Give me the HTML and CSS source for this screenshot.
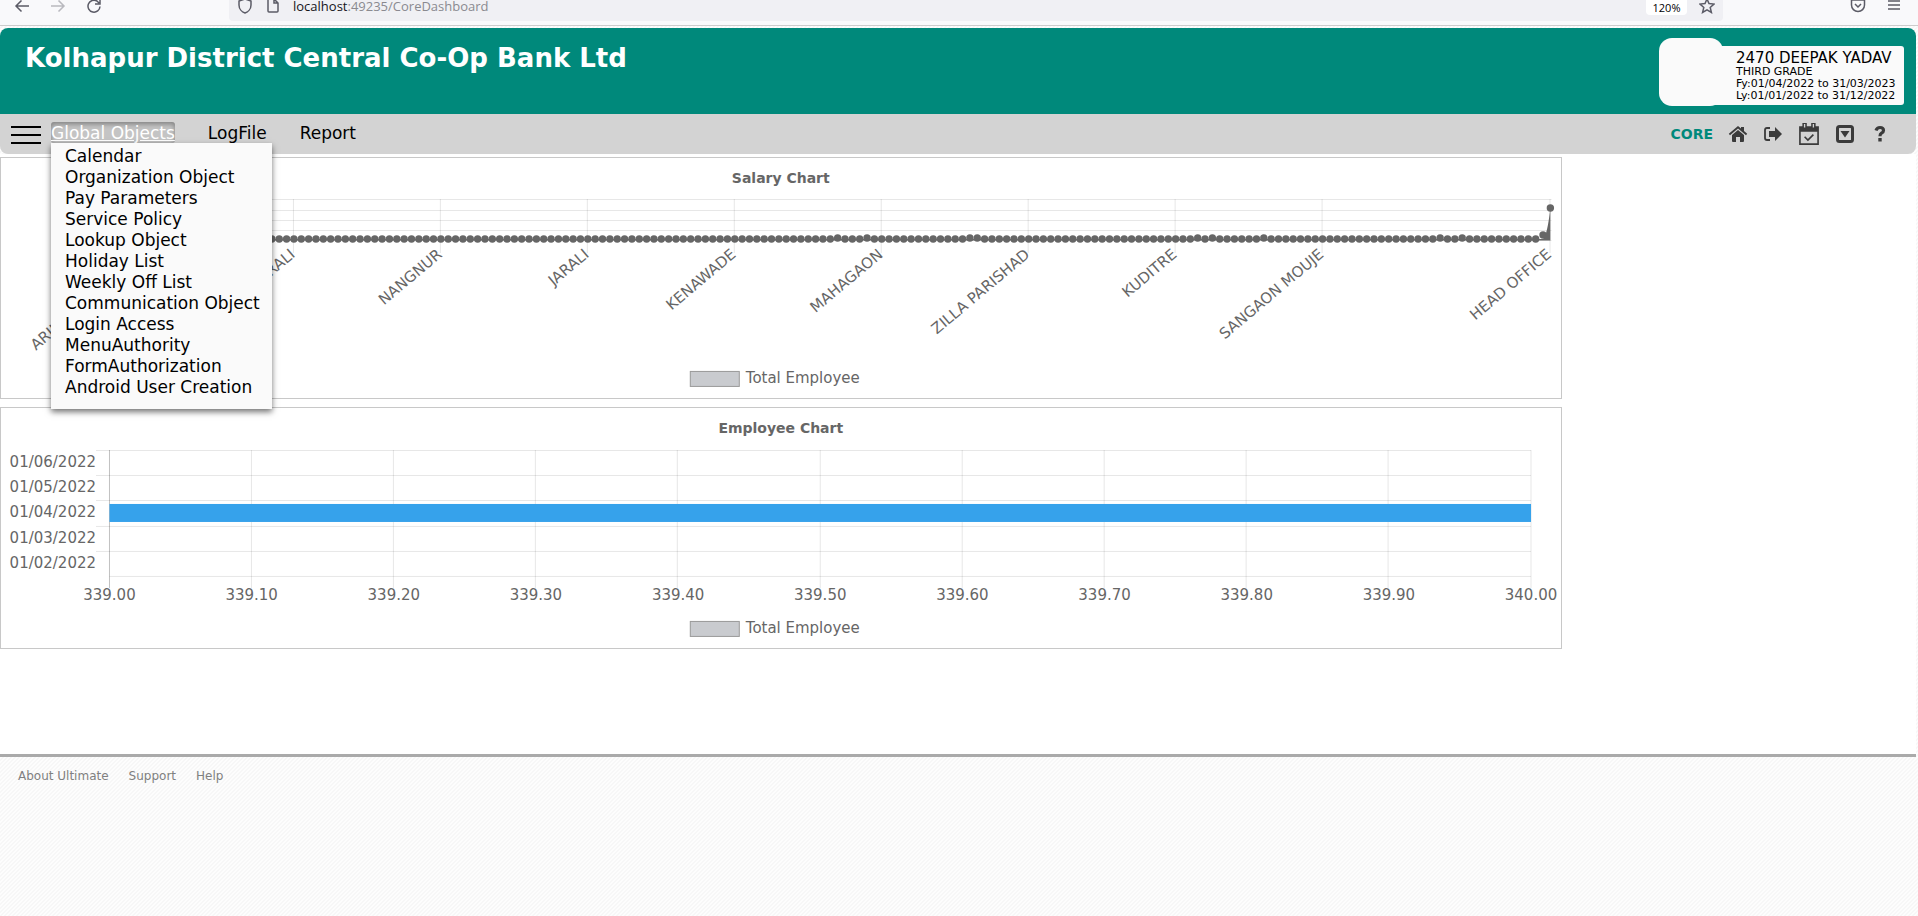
FILE: index.html
```html
<!DOCTYPE html>
<html lang="en">
<head>
<meta charset="utf-8">
<title>Core Dashboard</title>
<link rel="stylesheet" href="styles.css">
</head>
<body>
<div class="browser">
  <div class="browser-nav">
    <button class="tool" aria-label="Back"><svg width="16" height="16" viewBox="0 0 16 16"><path d="M15 8H2M7.500 2.500L2 8l5.500 5.500"/></svg></button>
    <button class="tool tool-off" aria-label="Forward"><svg width="16" height="16" viewBox="0 0 16 16"><path d="M1 8h13M8.500 2.500L14 8l-5.500 5.500"/></svg></button>
    <button class="tool" aria-label="Reload"><svg width="16" height="16" viewBox="0 0 16 16"><path d="M14 8.500A6 6 0 1 1 11 3l2 2M14 1v5H9"/></svg></button>
  </div>
  <div class="urlbar">
    <svg class="line-icon" width="16" height="16" viewBox="0 0 16 16"><path d="M8 1l6 2v4c0 4-3 7-6 8-3-1-6-4-6-8V3z"/></svg>
    <svg class="line-icon" width="16" height="16" viewBox="0 0 16 16"><path d="M3 1h6l4 4v8q0 1-1 1H4q-1 0-1-1zM9 1v4h4"/></svg>
    <span class="url">localhost<span class="url-rest">:49235/CoreDashboard</span></span>
    <button class="zoom-level">120%</button>
    <button class="tool" aria-label="Bookmark"><svg width="16" height="16" viewBox="0 0 16 16"><path d="M8 1l2 4.600 5 .5-3.800 3.300 1.200 5L8 11.800l-4.400 2.600 1.200-5L1 6.100l5-.5z"/></svg></button>
  </div>
  <div class="browser-end">
    <button class="tool" aria-label="Pocket"><svg width="16" height="16" viewBox="0 0 16 16"><path d="M1.500 2h13v5a6.500 6.500 0 0 1-13 0zM5 6l3 3 3-3"/></svg></button>
    <button class="tool" aria-label="Menu"><svg width="16" height="16" viewBox="0 0 16 16"><path d="M2 3h12M2 7h12M2 11h12"/></svg></button>
  </div>
</div>

<div class="page">
  <header class="banner">
    <h1 class="bank">Kolhapur District Central Co-Op Bank Ltd</h1>
    <div class="user">
      <div class="avatar"></div>
      <div class="user-info">
        <div class="user-name">2470 DEEPAK YADAV</div>
        <div>THIRD GRADE</div>
        <div>Fy:01/04/2022 to 31/03/2023</div>
        <div>Ly:01/01/2022 to 31/12/2022</div>
      </div>
    </div>
  </header>

  <nav class="menubar">
    <button class="burger" aria-label="Toggle menu"><span></span><span></span><span></span></button>
    <div class="menu-root">
      <a class="menu-link menu-active" href="#">Global Objects</a>
      <div class="dropdown">
        <a href="#">Calendar</a>
        <a href="#">Organization Object</a>
        <a href="#">Pay Parameters</a>
        <a href="#">Service Policy</a>
        <a href="#">Lookup Object</a>
        <a href="#">Holiday List</a>
        <a href="#">Weekly Off List</a>
        <a href="#">Communication Object</a>
        <a href="#">Login Access</a>
        <a href="#">MenuAuthority</a>
        <a href="#">FormAuthorization</a>
        <a href="#">Android User Creation</a>
      </div>
    </div>
    <a class="menu-link" href="#">LogFile</a>
    <a class="menu-link" href="#">Report</a>
    <div class="actions">
      <span class="module">CORE</span>
      <a href="#" aria-label="Home"><svg width="20" height="20" viewBox="0 0 20 20"><path d="M10 6l6 5v6q0 1-1 1h-3v-5H8v5H5q-1 0-1-1v-6z"/><path d="M10 2l3 2.500V3h3v4l3.200 2.800-1.200 1.400L10 4.500l-8 6.700L.8 9.800z"/></svg></a>
      <a href="#" aria-label="Log out"><svg width="20" height="20" viewBox="0 0 20 20"><path d="M7 4H4q-2 0-2 2v8q0 2 2 2h3" fill="none" stroke="#3b3b3b" stroke-width="1.800"/><path d="M6 7h6V3l7 7-7 7v-4H6z"/></svg></a>
      <a href="#" aria-label="Calendar"><svg width="22" height="22" viewBox="0 0 20 20"><path d="M1 3h18v17H1zM2.500 8v10.500h15V8z" fill-rule="evenodd"/><path d="M4 0h4v5H4zM12 0h4v5h-4z"/><path d="M6 1v3M14 1v3" stroke="#d3d3d3" stroke-width="1.200"/><path d="M6 12.500l3 3 5-5" fill="none" stroke="#3b3b3b" stroke-width="1.500"/></svg></a>
      <a href="#" aria-label="More"><svg width="20" height="20" viewBox="0 0 20 20"><rect x="2.500" y="2.500" width="15" height="15" rx="2" fill="none" stroke="#3b3b3b" stroke-width="3"/><path d="M5.500 7h9L10 13.500z"/></svg></a>
      <a href="#" aria-label="Help"><svg width="20" height="20" viewBox="0 0 20 20"><path d="M6 6.500Q7 3.500 10 3.500q3.500 0 3.500 3 0 1.500-2 2.700-1.500.9-1.500 3" fill="none" stroke="#3b3b3b" stroke-width="3.200"/><path d="M8.300 14h3.400v3.500H8.300z"/></svg></a>
    </div>
  </nav>

  <main class="content">
    <section class="chart-card">
      <svg class="chart" viewBox="0 0 1560 240" role="img" aria-label="Salary Chart">
        <text class="chart-title" x="780" y="25">Salary Chart</text>
        <g id="salary"></g>
        <rect class="legend-box" x="689.500" y="213.500" width="49" height="15"/>
        <text x="745" y="225">Total Employee</text>
      </svg>
    </section>
    <section class="chart-card">
      <svg class="chart" viewBox="0 0 1560 240" role="img" aria-label="Employee Chart">
        <text class="chart-title" x="780" y="25">Employee Chart</text>
        <g id="employee"></g>
        <rect class="legend-box" x="689.500" y="213.500" width="49" height="15"/>
        <text x="745" y="225">Total Employee</text>
      </svg>
    </section>
  </main>
</div>

<footer class="footer">
  <a href="#">About Ultimate</a>
  <a href="#">Support</a>
  <a href="#">Help</a>
</footer>
<script src="charts.js"></script>
</body>
</html>
```

FILE: styles.css
```css
* { box-sizing: border-box; }

body {
  margin: 0;
  min-height: 100vh;
  font-family: Verdana, "DejaVu Sans", sans-serif;
  font-size: 17px;
  color: #000;
  background: #fbfbfb linear-gradient(135deg, #f7f7f7 13%, #fdfdfd 13% 38%, #f7f7f7 38% 63%, #fdfdfd 63% 88%, #f7f7f7 88%) 0 0 / 4px 4px;
}

button { border: 0; padding: 0; background: none; font: inherit; }
a { color: inherit; text-decoration: none; }
h1 { margin: 0; }

/* Browser toolbar */
.browser {
  display: flex;
  justify-content: space-between;
  height: 26px;
  background: #f9f9fb;
  border-bottom: 1px solid #ccc;
  font-family: "Open Sans", sans-serif;
}
.browser-nav { display: flex; gap: 20px; width: 229px; padding-left: 14px; }
.browser-end { display: flex; gap: 20px; width: 195px; padding-right: 16px; justify-content: flex-end; }
.tool { display: flex; width: 16px; height: 16px; margin-top: -2px; }
.tool svg, .line-icon { fill: none; stroke: #5b5b66; stroke-width: 1.5; flex: none; }
.line-icon { margin-top: -2px; }
.tool-off { opacity: 0.4; }
.urlbar {
  display: flex;
  flex: 1;
  gap: 12px;
  height: 21px;
  padding: 0 8px;
  background: #f0f0f4;
  border-radius: 0 0 4px 4px;
}
.url { flex: 1; font-size: 13px; line-height: 13px; color: #15141a; }
.url-rest { color: #8a8a90; }
.zoom-level {
  width: 41px;
  height: 15px;
  border-radius: 0 0 4px 4px;
  background: #fff;
  font-size: 11px;
  line-height: 13px;
}

/* Header */
.page { margin: 2px 2px 0 0; }
.banner {
  display: flex;
  justify-content: space-between;
  height: 86px;
  padding: 10px 12px 8px 25px;
  background: #00897b;
  border-radius: 8px 8px 0 0;
}
.bank { font-size: 26px; line-height: 40px; color: #fff; }
.user { display: flex; align-items: center; }
.avatar { width: 64px; height: 68px; border-radius: 13px; background: #fafafa; }
.user-info {
  min-width: 193px;
  height: 59px;
  margin: 7px 0 0 -12px;
  padding: 4px 0 0 25px;
  border-radius: 3px;
  background: #fafafa;
  font-size: 11px;
  line-height: 12px;
  white-space: nowrap;
}
.user-name { font-size: 15px; line-height: 16px; }

/* Menu bar */
.menubar {
  display: flex;
  align-items: center;
  height: 40px;
  padding: 0 26px 0 11px;
  background: #d3d3d3;
  border-radius: 0 0 8px 8px;
}
.burger { display: grid; gap: 6px; width: 30px; margin: 2px 10px 0 0; }
.burger span { height: 2px; background: #000; }
.menu-root { position: relative; margin-bottom: 4px; }
.menu-link { height: 21px; margin: 0 33px 4px 0; line-height: 22px; }
.menu-root .menu-link { display: block; margin-bottom: 0; }
.menu-active {
  border-radius: 3px;
  background: #c4c4c4;
  box-shadow: inset 0 2px 5px rgba(0, 0, 0, 0.35);
  color: #fff;
  text-decoration: underline;
}
.dropdown {
  position: absolute;
  top: 100%;
  left: 0;
  z-index: 2;
  padding: 3px 12px 11px 14px;
  background: #fafafa;
  box-shadow: 0 3px 6px rgba(0, 0, 0, 0.55);
  white-space: nowrap;
}
.dropdown a { display: block; line-height: 21px; }
.actions { display: flex; align-items: center; gap: 15px; margin-left: auto; }
.actions a { display: flex; }
.actions svg { fill: #3b3b3b; }
.module { font-size: 14px; line-height: 18px; font-weight: bold; color: #00897b; }

/* Charts */
.content {
  display: grid;
  align-content: start;
  gap: 8px;
  padding: 3px 0 105px;
  background: #fff;
}
.chart-card { width: 81.5%; border: 1px solid #c8c8c8; }
.chart { display: block; width: 100%; font-size: 15px; fill: #666; }
.chart-title { font-size: 14px; font-weight: bold; text-anchor: middle; }
.legend-box { fill: #c9cbcf; stroke: #999; }
.grid { stroke: rgba(0, 0, 0, 0.1); fill: none; }
.axis { stroke: rgba(0, 0, 0, 0.25); fill: none; }
.bar { fill: #36a2eb; }
.middle { text-anchor: middle; }
.end { text-anchor: end; }

/* Footer */
.footer {
  display: flex;
  gap: 20px;
  padding: 10px 18px;
  margin-right: 2px;
  border-top: 3px solid #aaa;
  font-size: 12px;
  line-height: 18px;
  color: #808080;
}
```

FILE: charts.js
```js
const NS = "http://www.w3.org/2000/svg";

function add(parent, tag, attrs, text) {
  const el = document.createElementNS(NS, tag);
  for (const key in attrs) el.setAttribute(key, attrs[key]);
  if (text) el.textContent = text;
  parent.appendChild(el);
}

function drawSalary() {
  const g = document.getElementById("salary");
  const left = 146, step = 7.35, count = 192, base = 82.5;
  [41, 52, 62, 72, 82].forEach(y => add(g, "path", { class: "grid", d: `M${left} ${y + 0.5}H1551` }));
  const labels = [[0, "ARJUNWADA KAGAL"], [20, "MURALI"], [40, "NANGNUR"], [60, "JARALI"], [80, "KENAWADE"],
    [100, "MAHAGAON"], [120, "ZILLA PARISHAD"], [140, "KUDITRE"], [160, "SANGAON MOUJE"], [191, "HEAD OFFICE"]];
  labels.forEach(([i, name]) => {
    const x = left + i * step;
    add(g, "path", { class: "grid", d: `M${Math.round(x) - 0.5} 41V95` });
    add(g, "text", { class: "end", transform: `translate(${x + 2} 98) rotate(-40)` }, name);
  });
  const raised = [94, 98, 112, 113, 143, 145, 152, 176, 179];
  for (let i = 0; i < count; i++) {
    let y = raised.includes(i) ? 80 : 81;
    if (i === 190) y = 77;
    if (i === 191) y = 50;
    add(g, "circle", { cx: left + i * step, cy: y, r: 3.7 });
  }
  const end = left + 191 * step;
  add(g, "path", { d: `M${left} 81H${end - step}Q${end - 3} 77 ${end} 50V${base}H${left}z` });
}

function drawEmployee() {
  const g = document.getElementById("employee");
  const left = 108.5, step = 142.2, right = left + step * 10;
  for (let i = 0; i <= 5; i++) {
    add(g, "path", { class: "grid", d: `M${i === 5 ? left : 95} ${Math.round(42 + i * 25.2) + 0.5}H${right}` });
  }
  for (let i = 0; i <= 10; i++) {
    const x = left + i * step;
    add(g, "path", { class: i ? "grid" : "axis", d: `M${Math.round(x) - 0.5} 42V180` });
    add(g, "text", { class: "middle", x: x, y: 192 }, (339 + i / 10).toFixed(2));
  }
  ["01/06/2022", "01/05/2022", "01/04/2022", "01/03/2022", "01/02/2022"].forEach((day, i) => {
    add(g, "text", { class: "end", x: 95, y: Math.round(59 + i * 25.2) }, day);
  });
  add(g, "rect", { class: "bar", x: left, y: 96, width: right - left, height: 18 });
}

drawSalary();
drawEmployee();
```
